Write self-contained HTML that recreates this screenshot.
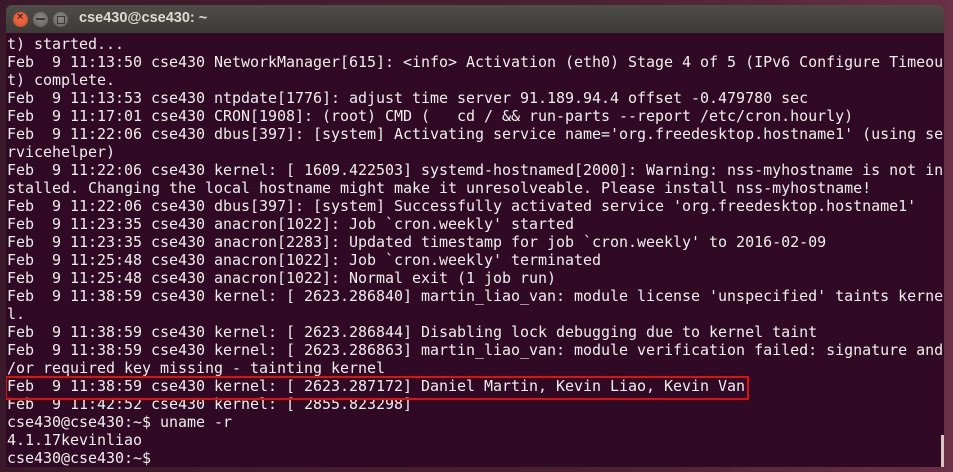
<!DOCTYPE html>
<html><head><style>
html,body{margin:0;padding:0;width:953px;height:472px;overflow:hidden;background:linear-gradient(90deg,#3a1a2a,#4a2030 60%,#6a3045);}
.win{position:absolute;left:6px;top:5px;width:938px;height:462px;background:#300a24;border-radius:6px 6px 0 0;overflow:hidden;}
.tb{height:28px;background:linear-gradient(#4e4d49,#3c3b37);position:relative;}
.tt{position:absolute;left:73px;top:5px;color:#dfdbd2;font:bold 14.5px "Liberation Sans",sans-serif;}
.b{position:absolute;top:7px;width:15px;height:15px;border-radius:50%;}
.term{position:absolute;left:1px;top:30px;font:15px/18px "DejaVu Sans Mono",monospace;color:#eeeeec;white-space:pre;letter-spacing:-0.03px;}
.box{position:absolute;left:-1px;top:371px;width:740px;height:20px;border:2px solid #e01010;}
.sb{position:absolute;left:935px;top:430px;width:3px;height:32px;background:#d8c8c0;}
</style></head><body>
<div class="win">
<div class="tb">
<div class="b" style="left:7px;background:radial-gradient(circle at 50% 40%,#f4704a,#d24a20);"></div>
<div class="b" style="left:27px;background:radial-gradient(circle at 50% 40%,#8a8983,#5f5e5a);"></div>
<div class="b" style="left:47px;background:radial-gradient(circle at 50% 40%,#8a8983,#5f5e5a);"></div>
<span style="position:absolute;left:11px;top:6px;color:#5a1a0a;font:bold 11px sans-serif">×</span>
<span style="position:absolute;left:30px;top:13px;width:9px;height:1.5px;background:#3a3a38"></span>
<span style="position:absolute;left:51px;top:11px;width:6px;height:6px;border:1.5px solid #3a3a38"></span>
<div class="tt">cse430@cse430: ~</div>
</div>
<div class="term">t) started...
Feb  9 11:13:50 cse430 NetworkManager[615]: &lt;info&gt; Activation (eth0) Stage 4 of 5 (IPv6 Configure Timeou
t) complete.
Feb  9 11:13:53 cse430 ntpdate[1776]: adjust time server 91.189.94.4 offset -0.479780 sec
Feb  9 11:17:01 cse430 CRON[1908]: (root) CMD (   cd / &amp;&amp; run-parts --report /etc/cron.hourly)
Feb  9 11:22:06 cse430 dbus[397]: [system] Activating service name='org.freedesktop.hostname1' (using se
rvicehelper)
Feb  9 11:22:06 cse430 kernel: [ 1609.422503] systemd-hostnamed[2000]: Warning: nss-myhostname is not in
stalled. Changing the local hostname might make it unresolveable. Please install nss-myhostname!
Feb  9 11:22:06 cse430 dbus[397]: [system] Successfully activated service 'org.freedesktop.hostname1'
Feb  9 11:23:35 cse430 anacron[1022]: Job `cron.weekly' started
Feb  9 11:23:35 cse430 anacron[2283]: Updated timestamp for job `cron.weekly' to 2016-02-09
Feb  9 11:25:48 cse430 anacron[1022]: Job `cron.weekly' terminated
Feb  9 11:25:48 cse430 anacron[1022]: Normal exit (1 job run)
Feb  9 11:38:59 cse430 kernel: [ 2623.286840] martin_liao_van: module license 'unspecified' taints kerne
l.
Feb  9 11:38:59 cse430 kernel: [ 2623.286844] Disabling lock debugging due to kernel taint
Feb  9 11:38:59 cse430 kernel: [ 2623.286863] martin_liao_van: module verification failed: signature and
/or required key missing - tainting kernel
Feb  9 11:38:59 cse430 kernel: [ 2623.287172] Daniel Martin, Kevin Liao, Kevin Van
Feb  9 11:42:52 cse430 kernel: [ 2855.823298]
cse430@cse430:~$ uname -r
4.1.17kevinliao
cse430@cse430:~$</div>
<div class="box"></div>
<div class="sb"></div>
</div>
</body></html>
